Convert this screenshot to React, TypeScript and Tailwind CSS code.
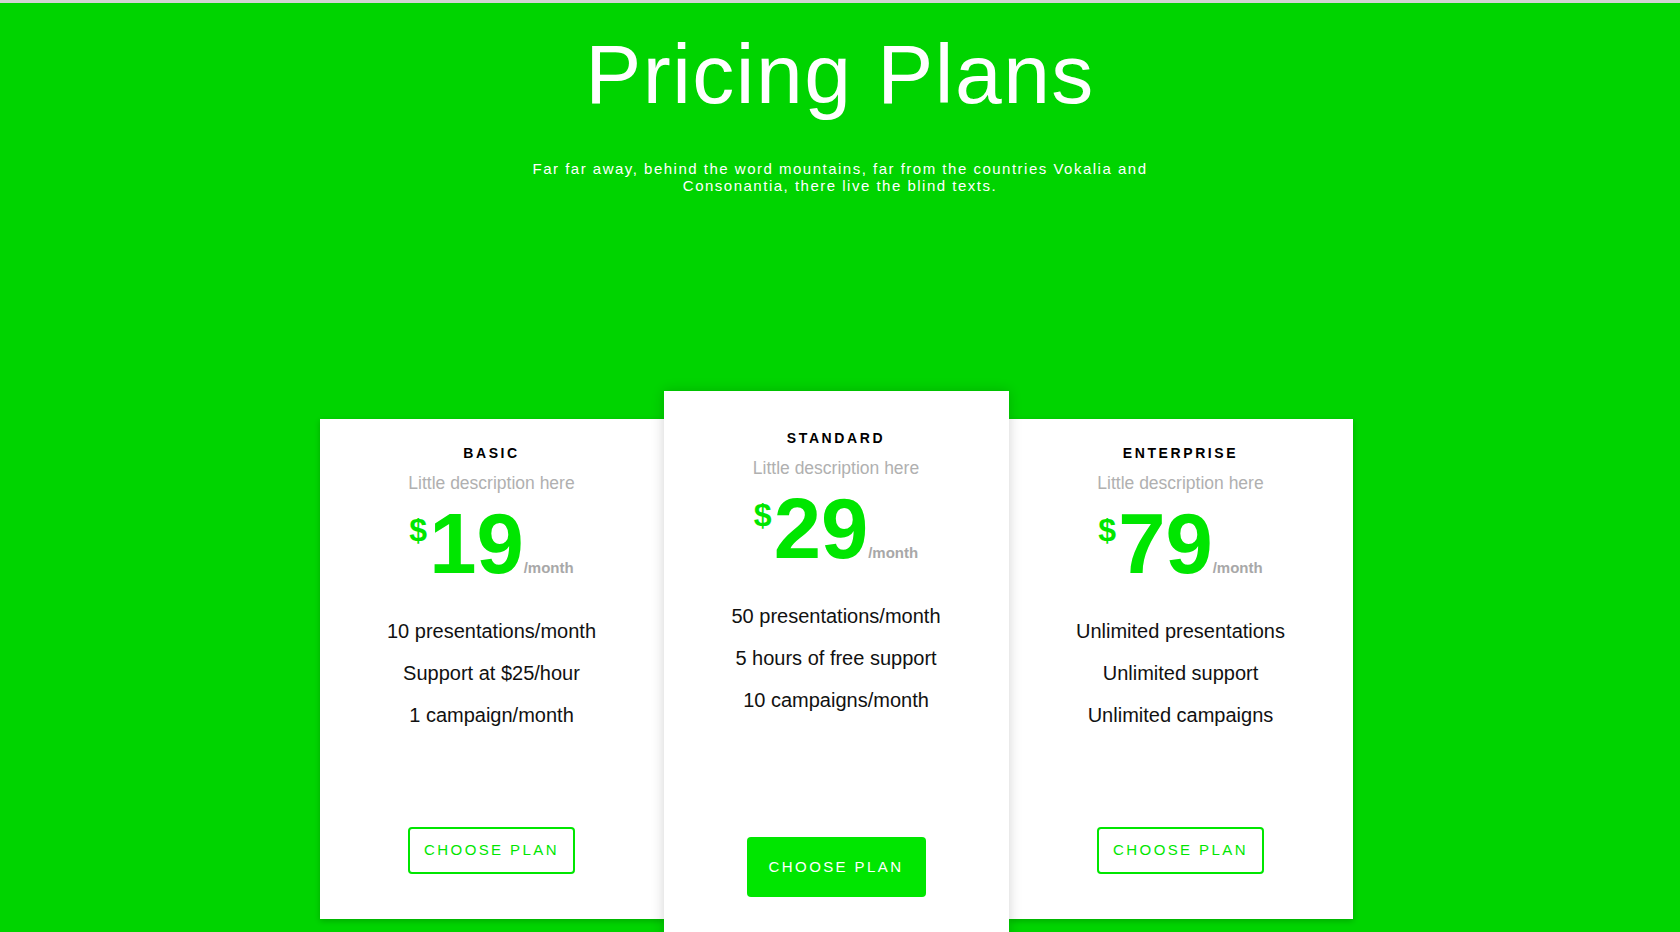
import React from 'react';

const plans = [
  {
    name: 'BASIC',
    price: '19',
    features: ['10 presentations/month', 'Support at $25/hour', '1 campaign/month'],
    featured: false,
  },
  {
    name: 'STANDARD',
    price: '29',
    features: ['50 presentations/month', '5 hours of free support', '10 campaigns/month'],
    featured: true,
  },
  {
    name: 'ENTERPRISE',
    price: '79',
    features: ['Unlimited presentations', 'Unlimited support', 'Unlimited campaigns'],
    featured: false,
  },
];

const App = () => {
  return (
    <div className="h-[932px] overflow-hidden bg-[#00d400] font-['Liberation_Sans',Arial,sans-serif] border-t-[3px] border-[#d4d4d4]">
      {/* Heading */}
      <section className="pt-[29px] text-center text-white">
        <h1 className="text-[84px] leading-none tracking-[1.5px] font-normal">Pricing Plans</h1>
        <p className="mx-auto mt-[44px] max-w-[680px] text-[15px] leading-[17px] tracking-[1.5px]">
          Far far away, behind the word mountains, far from the countries Vokalia and Consonantia, there live the blind texts.
        </p>
      </section>

      {/* Plans */}
      <section className="mt-[197px] flex justify-center pr-[8px]">
        <div className="flex items-start">
          {plans.map((plan) => (
            <div
              key={plan.name}
              className={
                plan.featured
                  ? 'relative z-10 w-[345px] bg-white pt-[37px] pb-[50px] text-center shadow-[0_0_12px_rgba(0,0,0,0.18)]'
                  : 'mt-[28px] w-[344px] bg-white pt-[24px] pb-[45px] text-center shadow-[0_2px_6px_rgba(0,0,0,0.2)]'
              }
            >
              <h3 className="text-[14px] leading-[20px] font-bold tracking-[2.6px] text-black">{plan.name}</h3>
              <p className="mt-[8px] text-[17.5px] leading-[24px] text-[#b0b0b0]">Little description here</p>
              <div className="mt-[6px] flex items-baseline justify-center font-bold">
                <span className="self-start mt-[13px] mr-[2px] text-[32px] leading-none text-[#00e600]">$</span>
                <span className="text-[85px] leading-none text-[#00e600]">{plan.price}</span>
                <span className="text-[15px] leading-none text-[#a8a8a8]">/month</span>
              </div>
              <ul className="mt-[24px]">
                {plan.features.map((f) => (
                  <li key={f} className="text-[20px] leading-[42px] text-[#111]">
                    {f}
                  </li>
                ))}
              </ul>
              {plan.featured ? (
                <button className="mt-[116px] h-[60px] w-[179px] rounded-[4px] bg-[#00e600] text-[15px] tracking-[2.4px] text-white">
                  CHOOSE PLAN
                </button>
              ) : (
                <button className="mt-[91px] h-[47px] w-[167px] rounded-[4px] border-2 border-[#00e600] bg-white text-[15px] tracking-[2.4px] text-[#00e600]">
                  CHOOSE PLAN
                </button>
              )}
            </div>
          ))}
        </div>
      </section>
    </div>
  );
};

export default App;
